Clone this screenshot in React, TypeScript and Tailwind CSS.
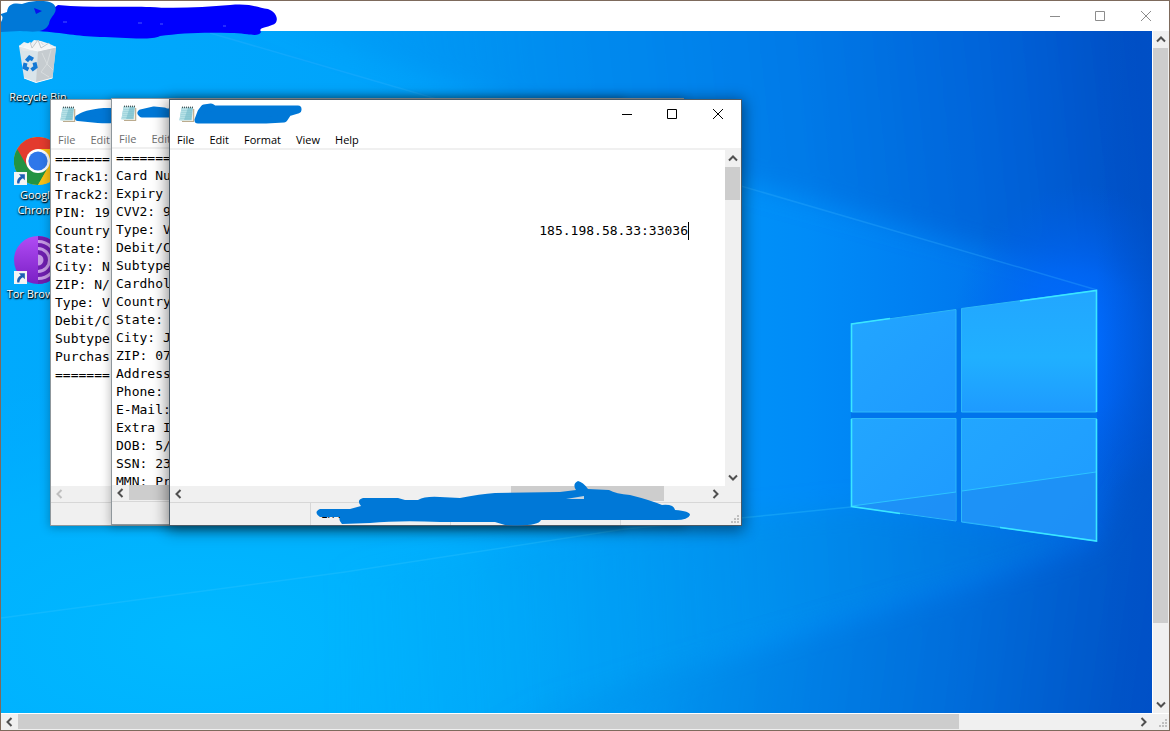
import type { ReactNode } from 'react';

const MONO = "font-['DejaVu_Sans_Mono',monospace]";
const UI = "font-['Open_Sans','Noto_Sans',sans-serif]";

const ARROWS = {
  up: 'M3 8.5 L7 4.5 L11 8.5',
  down: 'M3 4.5 L7 8.5 L11 4.5',
  left: 'M8.5 3 L4.5 7 L8.5 11',
  right: 'M4.5 3 L8.5 7 L4.5 11',
};

function Arrow({ dir, dim = false }: { dir: keyof typeof ARROWS; dim?: boolean }) {
  const shape = dir === 'up' || dir === 'down' ? 'h-[17px] w-[15px]' : 'h-[15px] w-[17px]';
  return (
    <button type="button" aria-label={`Scroll ${dir}`} disabled={dim} className={`flex shrink-0 items-center justify-center bg-[#f0f0f0] ${shape}`}>
      <svg className="size-3.5" viewBox="0 0 14 14" fill="none" stroke={dim ? '#bfbfbf' : '#505050'} strokeWidth="2">
        <path d={ARROWS[dir]} />
      </svg>
    </button>
  );
}

function Grip() {
  return (
    <svg className="size-2.5 shrink-0" viewBox="0 0 10 10" fill="#bfbfbf">
      <path d="M6 0h2v2h-2zM3 3h2v2h-2zM6 3h2v2h-2zM0 6h2v2h-2zM3 6h2v2h-2zM6 6h2v2h-2z" />
    </svg>
  );
}

function Controls({ tone }: { tone: string }) {
  return (
    <div className="flex h-full items-center">
      <button type="button" aria-label="Minimize" className="flex h-full w-[45px] items-center justify-center">
        <svg className="size-2.5" viewBox="0 0 10 10" stroke={tone}><path d="M0 5.5H10" /></svg>
      </button>
      <button type="button" aria-label="Maximize" className="flex h-full w-[46px] items-center justify-center">
        <svg className="size-2.5" viewBox="0 0 10 10" fill="none" stroke={tone}><path d="M.5 .5H9.5V9.5H.5Z" /></svg>
      </button>
      <button type="button" aria-label="Close" className="flex h-full w-[46px] items-center justify-center">
        <svg className="size-2.5" viewBox="0 0 10 10" stroke={tone}><path d="M0 0L10 10M10 0L0 10" /></svg>
      </button>
    </div>
  );
}

function NotepadIcon() {
  return (
    <svg className="size-4 shrink-0" viewBox="0 0 16 16">
      <path d="M4 3H15.2V15.8H3Z" fill="#a58f68" />
      <path d="M3 2H14.4V15H2Z" fill="#f3efe4" />
      <path d="M2.6 1.6H14L12.6 14.2H.4Z" fill="#8fcbd6" />
      <path d="M2.6 1.6H9L5 14.2H.4Z" fill="#b9e2e8" />
      <path d="M2.4 4.6H13M2.1 6.6H12.8M1.8 8.6H12.6M1.5 10.6H12.4M1.2 12.6H12.2" stroke="#7cbfcb" strokeWidth=".4" />
      <path d="M3.5 .6v1.6M5.5 .6v1.6M7.5 .6v1.6M9.5 .6v1.6M11.5 .6v1.6M13.5 .6v1.6" stroke="#3c4a4c" strokeWidth=".9" />
    </svg>
  );
}

type NotepadProps = {
  label: string;
  place: string;
  menu: string[];
  active?: boolean;
  children?: ReactNode;
  hscroll: ReactNode;
  scribble: ReactNode;
  status?: ReactNode;
};

function Notepad({ label, place, menu, active = false, children, hscroll, scribble, status }: NotepadProps) {
  return (
    <section
      aria-label={label}
      className={`absolute flex h-[427px] w-[573px] flex-col border bg-white ${active ? 'border-[#4b5a66] shadow-[0_3px_14px_2px_rgba(0,0,0,0.45)]' : 'border-[#8f979c] shadow-[0_1px_9px_1px_rgba(0,0,0,0.25)]'} ${place}`}
    >
      <header className="relative flex h-7 shrink-0 items-center justify-between pl-[9px]">
        <NotepadIcon />
        <Controls tone="#000" />
        {scribble}
      </header>
      <nav className={`flex h-5 shrink-0 items-center gap-[15px] pt-1 pl-[7px] text-[11px] leading-4 ${UI} ${active ? 'text-black' : 'text-[#6d6d6d]'}`}>
        {menu.map((item) => (
          <button key={item} type="button">{item}</button>
        ))}
      </nav>
      <div className="flex min-h-0 flex-1 border-t-2 border-[#f0f0f0]">
        <div className="relative min-w-0 flex-1">{children}</div>
        <div className="flex w-4 flex-col bg-[#f0f0f0]">
          <Arrow dir="up" />
          <div className="mr-px h-[33px] bg-[#cdcdcd]" />
          <div className="flex-1" />
          <Arrow dir="down" />
        </div>
      </div>
      <div className="flex h-4 shrink-0 bg-[#f0f0f0] pr-[17px] pb-px">{hscroll}</div>
      <footer className="relative flex h-[23px] shrink-0 items-end justify-between border-t border-[#d7d7d7] bg-[#f0f0f0]">
        {status ?? <span />}
        <Grip />
      </footer>
    </section>
  );
}

const CARD_DUMP = `=======
Track1:
Track2:
PIN: 19
Country
State:
City: N
ZIP: N/
Type: V
Debit/C
Subtype
Purchas
=======`;

const CARD_INFO = `=======
Card Nu
Expiry
CVV2: 9
Type: V
Debit/C
Subtype
Cardhol
Country
State:
City: J
ZIP: 07
Address
Phone:
E-Mail:
Extra I
DOB: 5/
SSN: 23
MMN: Pr`;

function Editor({ label, value, extra = '' }: { label: string; value: string; extra?: string }) {
  return (
    <textarea
      aria-label={label}
      readOnly
      value={value}
      className={`block size-full resize-none overflow-hidden bg-transparent pl-1 text-[13px] leading-[18px] whitespace-pre text-black outline-none ${MONO} ${extra}`}
    />
  );
}

function Wallpaper() {
  return (
    <svg className="absolute inset-0 size-full" viewBox="1 31 1151 682" preserveAspectRatio="none">
      <defs>
        <linearGradient id="base" x1="0" y1="0" x2="1" y2="0">
          <stop offset="0" stopColor="#00aafd" />
          <stop offset=".3" stopColor="#00a4fb" />
          <stop offset=".55" stopColor="#0098f8" />
          <stop offset=".7" stopColor="#008cf8" />
          <stop offset=".85" stopColor="#0078ee" />
          <stop offset=".95" stopColor="#0062e0" />
          <stop offset="1" stopColor="#0052cc" />
        </linearGradient>
        <radialGradient id="pool" gradientUnits="userSpaceOnUse" cx="200" cy="640" r="620" gradientTransform="translate(200 640) scale(1 .5) translate(-200 -640)">
          <stop offset="0" stopColor="#00b9ff" />
          <stop offset=".5" stopColor="#00b4ff" stopOpacity=".7" />
          <stop offset="1" stopColor="#00a8ff" stopOpacity="0" />
        </radialGradient>
        <linearGradient id="sky" gradientUnits="userSpaceOnUse" x1="220" y1="140" x2="1152" y2="40">
          <stop offset="0" stopColor="#0090ee" stopOpacity="0" />
          <stop offset=".35" stopColor="#0084ea" stopOpacity=".6" />
          <stop offset=".6" stopColor="#0074e2" stopOpacity=".7" />
          <stop offset=".85" stopColor="#005cd2" stopOpacity=".8" />
          <stop offset="1" stopColor="#044cc0" stopOpacity=".95" />
        </linearGradient>
        <linearGradient id="ground" gradientUnits="userSpaceOnUse" x1="480" y1="620" x2="1152" y2="713">
          <stop offset="0" stopColor="#0098ee" stopOpacity="0" />
          <stop offset=".35" stopColor="#0084e2" stopOpacity=".6" />
          <stop offset=".7" stopColor="#006ad6" stopOpacity=".8" />
          <stop offset="1" stopColor="#0450c4" />
        </linearGradient>
        <linearGradient id="under" gradientUnits="userSpaceOnUse" x1="300" y1="600" x2="1100" y2="560">
          <stop offset="0" stopColor="#00a8f4" stopOpacity="0" />
          <stop offset=".6" stopColor="#008ee8" stopOpacity=".65" />
          <stop offset="1" stopColor="#006ad8" stopOpacity=".9" />
        </linearGradient>
        <radialGradient id="edge" gradientUnits="userSpaceOnUse" cx="1080" cy="340" r="130" gradientTransform="translate(1080 340) scale(1 1.2) translate(-1080 -340)">
          <stop offset="0" stopColor="#006cff" />
          <stop offset=".45" stopColor="#0068fc" stopOpacity=".7" />
          <stop offset="1" stopColor="#0060ee" stopOpacity="0" />
        </radialGradient>
        <linearGradient id="shade" gradientUnits="userSpaceOnUse" x1="1097" y1="0" x2="1152" y2="0">
          <stop offset="0" stopColor="#0050c8" stopOpacity="0" />
          <stop offset="1" stopColor="#0050c8" stopOpacity=".6" />
        </linearGradient>
        <linearGradient id="pane" x1="0" y1="0" x2="1" y2="1">
          <stop offset="0" stopColor="#22a6ff" />
          <stop offset="1" stopColor="#1e9aff" />
        </linearGradient>
        <linearGradient id="paneR" x1="0" y1="0" x2="0" y2="1">
          <stop offset="0" stopColor="#22a6ff" />
          <stop offset=".55" stopColor="#20b0ff" />
          <stop offset="1" stopColor="#1e9aff" />
        </linearGradient>
        <filter id="soft" x="-15%" y="-15%" width="130%" height="130%">
          <feGaussianBlur stdDeviation="12" />
        </filter>
      </defs>
      <rect x="1" y="31" width="1151" height="682" fill="url(#base)" />
      <rect x="1" y="31" width="1151" height="682" fill="url(#pool)" />
      <path d="M851 507L771 515L625 529L345 572V740H560L735 649L992 574L1097 541Z" fill="url(#under)" filter="url(#soft)" />
      <path d="M200 0L741 180L1097 280H1220V-20H200Z" fill="url(#sky)" filter="url(#soft)" />
      <path d="M1097 545L992 578L735 653L540 709L400 780H1220V460H1140Z" fill="url(#ground)" filter="url(#soft)" />
      <rect x="940" y="170" width="212" height="330" fill="url(#edge)" />
      <rect x="1097" y="31" width="55" height="682" fill="url(#shade)" />
      <path d="M210 33L430 97L741 186L1097 290" fill="none" stroke="#35b4ff" strokeOpacity=".3" strokeWidth="1.5" />
      <path d="M851 507L771 515L625 529L345 572L1 618" fill="none" stroke="#35c8ff" strokeOpacity=".3" strokeWidth="1.5" />
      <path d="M851 323L1097 290V541L851 507Z" fill="#0074ec" />
      <g stroke="#2cb8f8" strokeWidth="1">
        <path d="M851.5 324L956 309.5V412H851.5Z" fill="url(#pane)" />
        <path d="M961.5 308.5L1096.5 290.5V412H961.5Z" fill="url(#paneR)" />
        <path d="M851.5 418.5H956V521L851.5 506.5Z" fill="url(#pane)" />
        <path d="M961.5 418.5H1096.5V541L961.5 522Z" fill="url(#pane)" />
      </g>
      <path d="M852 506L956 492V520.5Z M962 491L1096 472V540L962 521Z" fill="#1c8cf4" fillOpacity=".7" />
      <path d="M852 506L956 492M962 491L1096 472" stroke="#2cc4ff" />
      <path d="M851.5 412V324L890 318.5M851.5 419V506.5L900 513.5M1020 301L1096.5 290.5V412M1096.5 419V541L1000 527.5" fill="none" stroke="#3be6ff" strokeWidth="1.6" />
    </svg>
  );
}

function Shortcut() {
  return (
    <svg className="absolute bottom-0 left-0 size-[13px]" viewBox="0 0 12 12">
      <path d="M0 0H12V12H0Z" fill="#f4f4f4" />
      <path d="M4.5 2H10V7.5L8.2 5.8Q5 7.6 5 10.6H3Q2 6.6 6.3 3.9Z" fill="#1d5fb4" />
    </svg>
  );
}

function RecycleBin() {
  return (
    <svg className="size-12" viewBox="0 0 48 48">
      <path d="M5 7L10 3L16 5L20 1L27 2L33 4L38 6L42 8L37 12H9Z" fill="#eef1f3" />
      <path d="M12 9L17 4L22 9L27 3L33 9L36 5L38 10Z" fill="#cdd4d8" />
      <path d="M5 7L42 8L38.5 39L22 43.5L10 39Z" fill="#e2e6e9" fillOpacity=".96" />
      <path d="M9 8L16 3L20 7L24 1L29 6L35 4L38 9L30 12L16 11Z" fill="#f4f6f7" />
      <path d="M16 3L18 9L24 1L27 9L35 4" fill="none" stroke="#b4bcc2" strokeWidth=".8" />
      <path d="M24 12L42 8L38.5 39L22 43.5Z" fill="#c6ccd0" />
      <path d="M28 14L33 25L27 33L35 38M37 11L33 25L39 31" stroke="#d8dddf" fill="none" />
      <path d="M5 7L24 12L42 8M10 39L22 43.5L38.5 39" stroke="#f8fafb" fill="none" />
      <g fill="none" stroke="#1478d4" strokeWidth="4">
        <path d="M12.5 22L15.5 18.5L19 20.5" />
        <path d="M20.5 23.5L21.5 28L17.5 31" />
        <path d="M14.5 30.5L10.5 28.5L11.5 24" />
      </g>
    </svg>
  );
}

function ChromeLogo() {
  return (
    <svg className="size-12" viewBox="0 0 48 48">
      <circle cx="24" cy="24" r="24" fill="#fbc116" />
      <path d="M24 24L3.2 12A24 24 0 0 0 24 48L34.4 30Z" fill="#229342" />
      <path d="M3.2 12A24 24 0 0 1 44.8 12H24V24L13.6 30Z" fill="#e33b2e" />
      <path d="M24 12H44.8A24 24 0 0 1 24 48L34.4 30Z" fill="#fbc116" />
      <circle cx="24" cy="24" r="12" fill="#fff" />
      <circle cx="24" cy="24" r="9.6" fill="#2f77ea" />
    </svg>
  );
}

function TorLogo() {
  return (
    <svg className="size-12" viewBox="0 0 48 48">
      <defs>
        <linearGradient id="tor" x1="0" y1="0" x2="0" y2="1">
          <stop offset="0" stopColor="#b14cf5" />
          <stop offset="1" stopColor="#7a1fc4" />
        </linearGradient>
      </defs>
      <circle cx="24" cy="24" r="24" fill="url(#tor)" />
      <path d="M24 0A24 24 0 0 1 24 48Z" fill="#6f1eb0" />
      <path d="M24 5.5A18.5 18.5 0 0 1 24 42.5M24 12.5A11.5 11.5 0 0 1 24 35.5" fill="none" stroke="#c79be6" strokeWidth="3" />
      <path d="M24 18.5A5.5 5.5 0 0 1 24 29.5Z" fill="#c79be6" />
    </svg>
  );
}

function DesktopIcon({ art, shortcut = false, children }: { art: ReactNode; shortcut?: boolean; children: ReactNode }) {
  return (
    <button type="button" className={`flex w-[74px] flex-col items-center text-[11px] leading-[15px] font-medium text-white [text-shadow:0_1px_2px_#000,1px_1px_1px_#000] ${UI}`}>
      <span className="relative mb-0.5">
        {art}
        {shortcut && <Shortcut />}
      </span>
      {children}
    </button>
  );
}

export default function App() {
  return (
    <div className="flex h-screen flex-col overflow-hidden border border-[#7d6a5c] bg-white">
      <header className="relative z-10 flex h-[30px] shrink-0 items-center justify-end">
        <Controls tone="#8c8c8c" />
        <svg className="absolute top-0 left-0 h-10 w-[280px]" viewBox="1 1 280 40" aria-hidden="true">
          <path d="M58 5C90 8 130 6 150 7C175 9 205 7 230 5C252 3 258 8 268 9C279 13 279 24 272 25C266 28 258 27 261 32C258 38 248 33 230 33C205 32 180 33 160 36C150 41 120 37 100 37C75 36 65 33 38 31L48 12Z" fill="#0000fe" />
          <path d="M1 14L7 12C8 3 15 3 22 4C32 0 52 -1 55 6C58 14 50 16 49 24C45 33 35 32 20 31L1 32Z" fill="#0078d7" />
          <path d="M34 8L42 11L36 14Z" fill="#0712ee" />
          <path d="M1 15Q4 17 1 22Z" fill="#fff" />
          <path d="M63 22h4M138 23h4M160 24h3M223 26h3" stroke="#5a6cff" strokeWidth=".8" />
        </svg>
      </header>
      <div className="flex min-h-0 flex-1">
        <main className="relative min-w-0 flex-1 overflow-hidden">
          <Wallpaper />
          <div className="relative flex w-[74px] flex-col gap-[33px] pt-2">
            <DesktopIcon art={<RecycleBin />}>Recycle Bin</DesktopIcon>
            <div className="flex flex-col gap-[19px]">
              <DesktopIcon art={<ChromeLogo />} shortcut>
                <span>Google</span>
                <span>Chrome</span>
              </DesktopIcon>
              <DesktopIcon art={<TorLogo />} shortcut>Tor Browser</DesktopIcon>
            </div>
          </div>

          <Notepad
            label="Track data"
            place="top-[68px] left-[49px]"
            menu={['File', 'Edit']}
            hscroll={<Arrow dir="left" dim />}
            scribble={
              <svg className="absolute top-0 left-0 h-[30px] w-[70px]" viewBox="51 100 70 30" aria-hidden="true">
                <path d="M80 117Q84 113 104 111H116V119Q112 121 98 120L78 118Z" fill="#0078d7" stroke="#0078d7" strokeWidth="6" strokeLinejoin="round" />
              </svg>
            }
          >
            <Editor label="Track data text" value={CARD_DUMP} />
          </Notepad>

          <Notepad
            label="Card data"
            place="top-[67px] left-[110px]"
            menu={['File', 'Edit']}
            hscroll={<><Arrow dir="left" /><div className="w-[300px] bg-[#cdcdcd]" /></>}
            scribble={
              <svg className="absolute top-0 left-0 h-[30px] w-[70px]" viewBox="112 99 70 30" aria-hidden="true">
                <path d="M141 113L154 110L164 111L166 112H173V114L142 114Z" fill="#0078d7" stroke="#0078d7" strokeWidth="7" strokeLinejoin="round" />
              </svg>
            }
          >
            <Editor label="Card data text" value={CARD_INFO} />
          </Notepad>

          <Notepad
            label="Address"
            place="top-[68px] left-[168px]"
            menu={['File', 'Edit', 'Format', 'View', 'Help']}
            active
            hscroll={
              <>
                <Arrow dir="left" />
                <div className="flex-1" />
                <div className="mr-[43px] w-[153px] bg-[#cdcdcd]" />
                <Arrow dir="right" />
              </>
            }
            scribble={
              <svg className="absolute top-0 left-0 h-[30px] w-[140px]" viewBox="170 100 140 30" aria-hidden="true">
                <path d="M201 112L204 108L211 107L214 109H298V110L288 113L284 119L266 120L240 120H198Z" fill="#0078d7" stroke="#0078d7" strokeWidth="7" strokeLinejoin="round" />
              </svg>
            }
            status={
              <>
                <div className={`flex h-full flex-1 items-center pl-[140px] text-[12px] ${UI}`}>
                  <span className="flex h-full w-[140px] items-center border-l border-[#d7d7d7] pl-[10px]">Ln 5</span>
                  <span className="h-full w-[170px] border-l border-[#d7d7d7]" />
                  <span className="h-full border-l border-[#d7d7d7]" />
                </div>
                <svg className="absolute bottom-0 left-[140px] h-[45px] w-[400px] overflow-visible" viewBox="310 480 400 45" aria-hidden="true">
                  <path d="M320 509H350L361 506Q356 500 363 498L398 498L405 500H418Q425 496 440 497L460 498Q480 494 495 493L560 492L576 490Q572 484 578 481Q583 482 588 489L609 490Q616 494 630 495Q650 500 662 505Q674 504 675 510Q690 511 690 515Q688 520 676 520H541Q538 527 505 525L495 522H440Q400 520 370 523L342 524Q338 520 340 517H320Q313 512 320 509Z" fill="#0078d7" />
                  <path d="M566 499L584 496V499Z" fill="#c4d3df" />
                </svg>
              </>
            }
          >
            <Editor label="Address text" value={'\n\n\n\n185.198.58.33:33036'} extra="text-right pr-[37px]" />
            <span className="absolute top-[72px] right-[36px] h-[18px] w-px bg-black" />
          </Notepad>
        </main>
        <div className="flex w-[17px] shrink-0 flex-col border-l border-white bg-[#f0f0f0] pr-px">
          <Arrow dir="up" />
          <div className="h-[575px] bg-[#cdcdcd]" />
          <div className="flex-1" />
          <Arrow dir="down" />
        </div>
      </div>
      <div className="flex h-[17px] shrink-0 items-stretch border-t border-white bg-[#f0f0f0] pb-px">
        <Arrow dir="left" />
        <div className="w-[941px] bg-[#cdcdcd]" />
        <div className="flex-1" />
        <Arrow dir="right" />
        <div className="flex w-[17px] items-end justify-end"><Grip /></div>
      </div>
    </div>
  );
}
